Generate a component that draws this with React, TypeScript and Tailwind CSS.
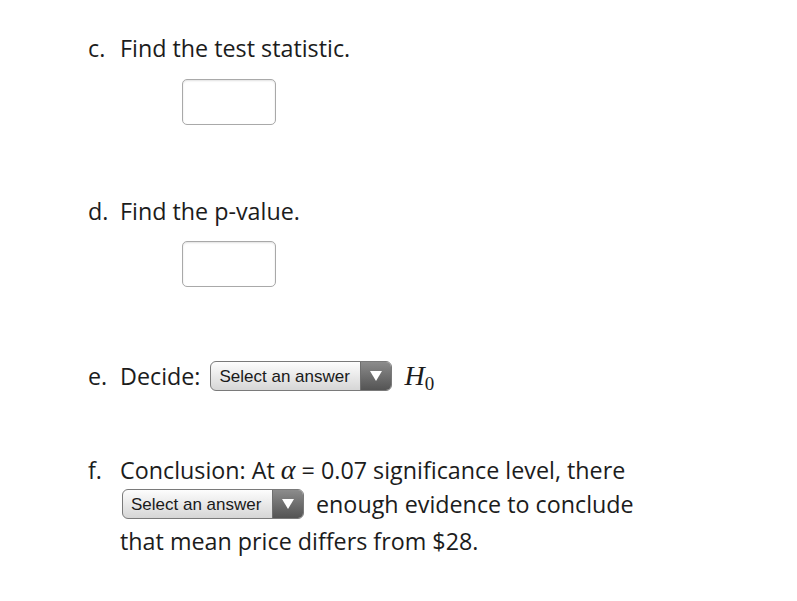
const SelectBox = () => (
  <span className="inline-flex h-[30px] w-[182px] align-middle overflow-hidden rounded-[6px] border border-[#7a7a7a] bg-gradient-to-b from-[#fdfdfd] to-[#d6d6d6] font-['Liberation_Sans',Arial,sans-serif] text-[17px] text-[#1a1a1a]">
    <span className="flex flex-1 items-center pl-[8px] leading-none">Select an answer</span>
    <span className="flex w-[31px] items-center justify-center border-l border-[#6f6f6f] bg-gradient-to-b from-[#8c8c8c] to-[#545454]">
      <svg width="12" height="10" viewBox="0 0 12 10">
        <path d="M0 0 H12 L6 10 Z" fill="#ffffff" />
      </svg>
    </span>
  </span>
);

const AnswerBox = () => (
  <div className="ml-[62px] h-[46px] w-[94px] rounded-[5px] border border-[#a9a9a9] bg-white shadow-[inset_0_1px_2px_rgba(0,0,0,0.12)]" />
);

const Item = ({ label, children }: { label: string; children: React.ReactNode }) => (
  <div className="flex">
    <div className="w-[32px] shrink-0">{label}</div>
    <div className="flex-1">{children}</div>
  </div>
);

export default function App() {
  return (
    <div className="min-h-[601px] w-[797px] bg-white pl-[88px] pt-[31px] font-['Open_Sans',sans-serif] text-[23.3px] leading-[34px] text-[#1c1c1c]">
      <Item label="c.">
        <div>Find the test statistic.</div>
        <div className="mt-[14px]">
          <AnswerBox />
        </div>
      </Item>

      <div className="mt-[69px]">
        <Item label="d.">
          <div>Find the p-value.</div>
          <div className="mt-[13px]">
            <AnswerBox />
          </div>
        </Item>
      </div>

      <div className="mt-[72px]">
        <Item label="e.">
          <div className="flex items-center">
            <span>Decide:</span>
            <span className="ml-[10px] flex">
              <SelectBox />
            </span>
            <span className="ml-[12px] font-['Liberation_Serif',serif] text-[28px] italic">
              H<sub className="text-[19px] not-italic">0</sub>
            </span>
          </div>
        </Item>
      </div>

      <div className="mt-[60px]">
        <Item label="f.">
          <div className="w-[560px]">
            <div>
              Conclusion: At{" "}
              <span className="font-['Liberation_Serif',serif] text-[28px] italic">α</span> = 0.07
              significance level, there
            </div>
            <div className="flex h-[34px] items-center">
              <span className="ml-[2px] flex">
                <SelectBox />
              </span>
              <span className="ml-[12px]">enough evidence to conclude</span>
            </div>
            <div className="mt-[3px]">that mean price differs from $28.</div>
          </div>
        </Item>
      </div>
    </div>
  );
}
